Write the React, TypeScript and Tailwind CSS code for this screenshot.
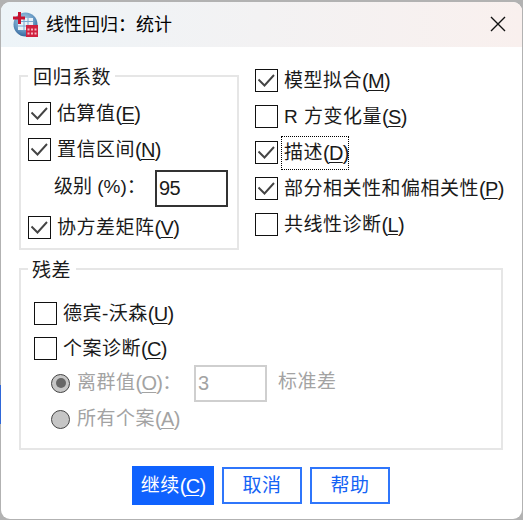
import { useState } from "react";

type LabelProps = {
  text: string;
  mnemonic?: string;
  suffix?: string;
};

function Label({ text, mnemonic, suffix }: LabelProps) {
  return (
    <span className="flex items-center whitespace-pre">
      <span className="tracking-[0.5px]">{text}</span>
      {mnemonic && (
        <span className="text-[20px] tracking-[-0.7px]">
          (
          <span className="underline decoration-1 underline-offset-2">
            {mnemonic}
          </span>
          )
        </span>
      )}
      {suffix}
    </span>
  );
}

type CheckRowProps = LabelProps & {
  defaultChecked?: boolean;
  focused?: boolean;
};

function CheckRow({ text, mnemonic, defaultChecked = false, focused }: CheckRowProps) {
  const [checked, setChecked] = useState(defaultChecked);

  return (
    <button
      type="button"
      role="checkbox"
      aria-checked={checked}
      onClick={() => setChecked(!checked)}
      className="flex h-[23px] items-center"
    >
      <span className="flex size-[23px] items-center justify-center border-[1.5px] border-[#111] bg-white">
        {checked && (
          <svg width="19" height="19" viewBox="0 0 19 19" fill="none">
            <path d="M1.5 8.5 7.5 14.5 17 4" stroke="#444" strokeWidth="1.9" />
          </svg>
        )}
      </span>
      <span
        className={
          focused
            ? "ml-[3px] flex h-[34px] w-[68px] items-center border border-dotted border-black pl-[2px]"
            : "ml-[6px]"
        }
      >
        <Label text={text} mnemonic={mnemonic} />
      </span>
    </button>
  );
}

function Radio({ selected }: { selected?: boolean }) {
  return (
    <span className="mr-[7px] flex size-[19px] items-center justify-center rounded-full border-[1.5px] border-[#444] bg-[#c6c6c6]">
      {selected && <span className="size-[10px] rounded-full bg-[#666]" />}
    </span>
  );
}

function AppIcon() {
  return (
    <svg width="25" height="25" viewBox="0 0 25 25">
      <defs>
        <radialGradient id="globe" cx="0.45" cy="0.35" r="0.65">
          <stop offset="0" stopColor="#b5d3e9" />
          <stop offset="0.6" stopColor="#6a9cc6" />
          <stop offset="1" stopColor="#35679c" />
        </radialGradient>
      </defs>
      <circle cx="12.5" cy="12.5" r="12" fill="url(#globe)" />
      <path d="M8 6h12v12H5v-6h3z" fill="#e9f1f8" />
      <path d="M8 9.5h12M5 14h15M11 6v12M15 6v12" stroke="#7ba7cf" strokeWidth="1" />
      <path d="M6.5 0v12M0 6h12" stroke="#c8102e" strokeWidth="3" />
      <path d="M13 13h12v12H13z" fill="#d0213f" />
      <path d="M14.5 16.5h2v2h-2zM18 16.5h2v2h-2zM21.5 16.5h2v2h-2zM14.5 20.5h2v2h-2zM18 20.5h2v2h-2zM21.5 20.5h2v2h-2z" fill="#f3b6c2" />
    </svg>
  );
}

export default function App() {
  const [level, setLevel] = useState("95");

  return (
    <main className="flex h-[520px] w-[523px] overflow-hidden bg-[#b2b2b2] pt-[2px] font-['Liberation_Sans','Noto_Sans_CJK_SC',sans-serif] text-[19px] leading-[24px] text-[#1a1a1a]">
      <div className="w-px shrink-0 pt-[383px]">
        <div className="h-[39px] bg-[#2f67d8]" />
      </div>
      <div className="h-[517px] w-[521px] shrink-0 overflow-hidden rounded-[9px] bg-white">
        <header className="flex h-[45px] items-center bg-gradient-to-r from-[#edf4f8] to-[#f9f0ee] pl-[12px] pr-[15px]">
          <AppIcon />
          <h1 className="ml-[8px] -mt-[3px] font-['Noto_Sans_CJK_SC',sans-serif] text-[18px] text-black">
            线性回归：统计
          </h1>
          <svg className="-mt-px ml-auto" width="18" height="18" viewBox="0 0 18 18">
            <path d="m2 2 14 14M16 2 2 16" stroke="#111" strokeWidth="1.4" />
          </svg>
        </header>

        <div className="flex pl-[18px] pt-[15px]">
          <fieldset className="h-[188px] w-[220px] border-2 border-[#e6e6e6] pl-[7px]">
            <legend className="h-[28px] pl-[5px] pr-[4px] pt-[4px]">
              <Label text="回归系数" />
            </legend>
            <div className="flex flex-col gap-[13px] pt-[12px]">
              <CheckRow text="估算值" mnemonic="E" defaultChecked />
              <CheckRow text="置信区间" mnemonic="N" defaultChecked />
            </div>
            <div className="mt-[9px] flex h-[36px] items-center pl-[26px]">
              <span className="-mt-[3px] w-[101px] whitespace-nowrap">级别 (%)：</span>
              <input
                value={level}
                onChange={(e) => setLevel(e.target.value)}
                className="h-[37px] w-[73px] border-2 border-[#333] px-[2px] text-[20px] tracking-[-0.5px] outline-none"
              />
            </div>
            <div className="mt-[10px]">
              <CheckRow text="协方差矩阵" mnemonic="V" defaultChecked />
            </div>
          </fieldset>

          <div className="ml-[16px] flex flex-col gap-[13px] pt-[7px]">
            <CheckRow text="模型拟合" mnemonic="M" defaultChecked />
            <CheckRow text="R 方变化量" mnemonic="S" />
            <CheckRow text="描述" mnemonic="D" defaultChecked focused />
            <CheckRow text="部分相关性和偏相关性" mnemonic="P" defaultChecked />
            <CheckRow text="共线性诊断" mnemonic="L" />
          </div>
        </div>

        <fieldset className="ml-[18px] mt-[5px] h-[195px] w-[484px] border-2 border-[#e6e6e6] pl-[13px]">
          <legend className="ml-[-6px] h-[28px] pl-[4px] pr-[5px] pt-[4px]">
            <Label text="残差" />
          </legend>
          <div className="flex flex-col gap-[12px] pt-[19px]">
            <CheckRow text="德宾-沃森" mnemonic="U" />
            <CheckRow text="个案诊断" mnemonic="C" />
          </div>
          <div className="pl-[17px] text-[#a3a3a3]">
            <div className="mt-[5px] flex h-[36px] items-center">
              <Radio selected />
              <span className="w-[117px]">
                <Label text="离群值" mnemonic="O" suffix="：" />
              </span>
              <input
                disabled
                value="3"
                className="h-[37px] w-[73px] border-2 border-[#cfcfcf] px-[2px] text-[20px]"
              />
              <span className="-mt-[3px] ml-[11px]">
                <Label text="标准差" />
              </span>
            </div>
            <div className="mt-[6px] flex h-[24px] items-center">
              <Radio />
              <Label text="所有个案" mnemonic="A" />
            </div>
          </div>
        </fieldset>

        <footer className="mt-[16px] flex items-center gap-[8px] pl-[131px]">
          <button type="button" className="flex h-[39px] w-[82px] items-center justify-center bg-[#0f62fe] text-white">
            <Label text="继续" mnemonic="C" />
          </button>
          <button type="button" className="flex h-[37px] w-[80px] items-center justify-center border-2 border-[#2f76fb] text-[#1463f5]">
            <Label text="取消" />
          </button>
          <button type="button" className="flex h-[37px] w-[80px] items-center justify-center border-2 border-[#2f76fb] text-[#1463f5]">
            <Label text="帮助" />
          </button>
        </footer>
      </div>
    </main>
  );
}
